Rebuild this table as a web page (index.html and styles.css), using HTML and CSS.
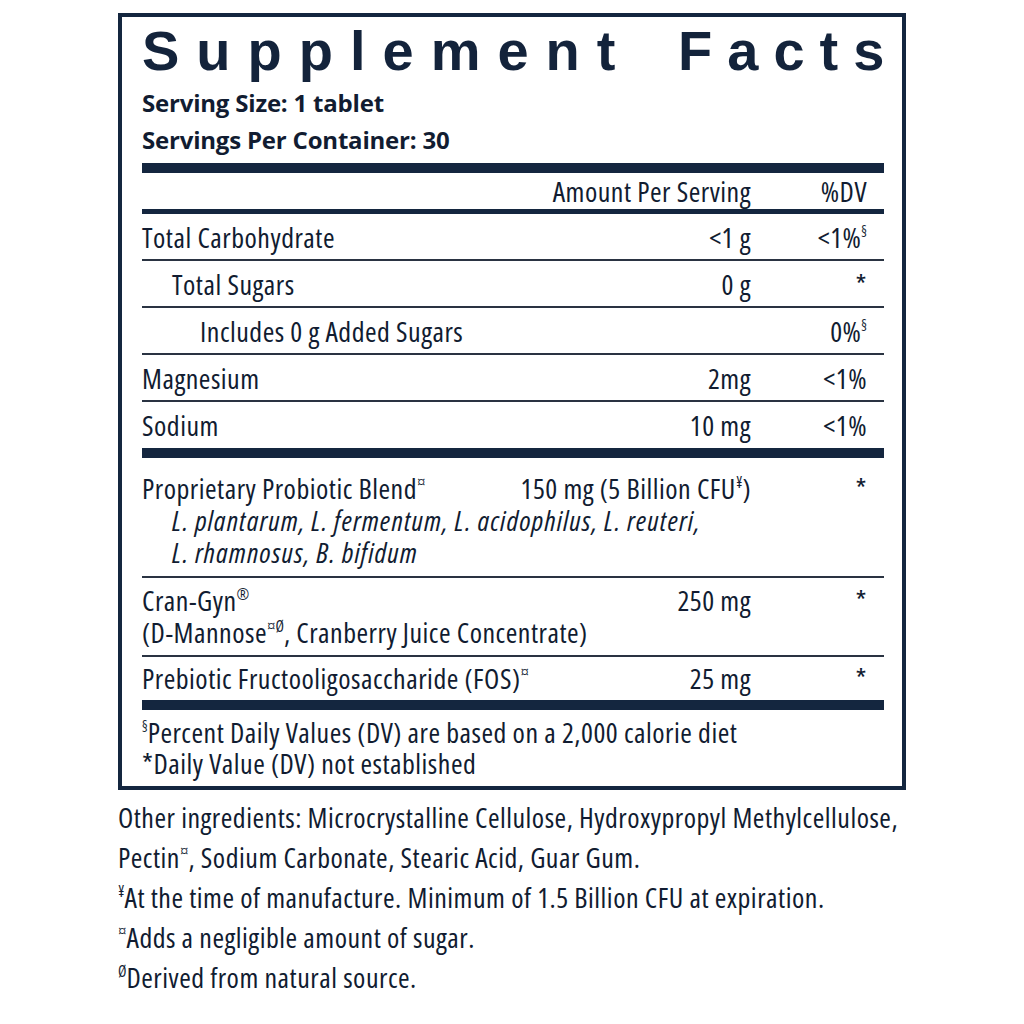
FILE: index.html
```html
<!DOCTYPE html>
<html lang="en">
<head>
<meta charset="utf-8">
<title>Supplement Facts</title>
<link rel="stylesheet" href="styles.css">
</head>
<body>
<div class="label">
  <h1 class="title">Supplement <span class="word">Facts</span></h1>
  <div class="servings">
    <div class="serving">Serving Size: 1 tablet</div>
    <div class="serving">Servings Per Container: 30</div>
  </div>
  <div class="bar bar-thick"></div>
  <div class="row head"><span></span><span class="amt">Amount Per Serving</span><span class="dv">%DV</span></div>
  <div class="bar bar-mid"></div>
  <div class="row line"><span>Total Carbohydrate</span><span class="amt">&lt;1 g</span><span class="dv">&lt;1%<sup class="sym">§</sup></span></div>
  <div class="row line"><span class="ind1">Total Sugars</span><span class="amt">0 g</span><span class="dv">*</span></div>
  <div class="row line"><span class="ind2">Includes 0 g Added Sugars</span><span class="amt"></span><span class="dv">0%<sup class="sym">§</sup></span></div>
  <div class="row line"><span>Magnesium</span><span class="amt">2mg</span><span class="dv">&lt;1%</span></div>
  <div class="row last"><span>Sodium</span><span class="amt">10 mg</span><span class="dv">&lt;1%</span></div>
  <div class="bar bar-thick"></div>
  <div class="blend blend-pro line">
    <span class="nm">Proprietary Probiotic Blend<sup class="sym">¤</sup></span><span class="amt">150 mg (5 Billion CFU<sup class="sym">¥</sup>)</span><span class="dv">*</span>
    <span class="species">L. plantarum, L. fermentum, L. acidophilus, L. reuteri,<br>L. rhamnosus, B. bifidum</span>
  </div>
  <div class="blend blend-cran line">
    <span class="nm">Cran-Gyn<sup class="sym">®</sup><br>(D-Mannose<sup class="sym">¤Ø</sup>, Cranberry Juice Concentrate)</span><span class="amt">250 mg</span><span class="dv">*</span>
  </div>
  <div class="blend blend-fos">
    <span class="nm">Prebiotic Fructooligosaccharide (FOS)<sup class="sym">¤</sup></span><span class="amt">25 mg</span><span class="dv">*</span>
  </div>
  <div class="bar bar-thick"></div>
  <div class="notes">
    <div><sup class="sym">§</sup>Percent Daily Values (DV) are based on a 2,000 calorie diet</div>
    <div>*Daily Value (DV) not established</div>
  </div>
</div>
<div class="other">
  <p>Other ingredients: Microcrystalline Cellulose, Hydroxypropyl Methylcellulose,<br>Pectin<sup class="sym">¤</sup>, Sodium Carbonate, Stearic Acid, Guar Gum.</p>
  <p><sup class="sym">¥</sup>At the time of manufacture. Minimum of 1.5 Billion CFU at expiration.</p>
  <p><sup class="sym">¤</sup>Adds a negligible amount of sugar.</p>
  <p><sup class="sym">Ø</sup>Derived from natural source.</p>
</div>
</body>
</html>
```
FILE: styles.css
```css
* { box-sizing: border-box; }
html, body { background: #ffffff; }
body {
  margin: 0;
  color: #111c31;
  font-family: "Open Sans", "DejaVu Sans Condensed", sans-serif;
  font-stretch: 75%;
  font-size: 28px;
  letter-spacing: 0.5px;
}
.label {
  margin: 13px 0 0 118px;
  width: 788px;
  border: 4px solid #14263f;
  padding: 6px 18px 7px 20px;
}
.title {
  margin: 0;
  font-family: "Liberation Sans", Arial, sans-serif;
  font-stretch: 100%;
  font-weight: 700;
  font-size: 56px;
  line-height: 56px;
  letter-spacing: 17px;
  word-spacing: 13px;
  color: #13233b;
  white-space: nowrap;
}
.title .word { letter-spacing: 15px; }
.servings { padding: 5px 0 5px; }
.serving {
  font-weight: 700;
  font-size: 24px;
  font-stretch: 100%;
  letter-spacing: -0.2px;
  line-height: 37px;
}
.bar { background: #14263f; }
.bar-thick { height: 10px; }
.bar-mid { height: 5px; }
.row {
  display: grid;
  grid-template-columns: 1fr auto 116px;
  padding-right: 17px;
  line-height: 44px;
  padding-top: 1px;
}
.row.head { line-height: 36px; padding-top: 0; }
.line { border-bottom: 2px solid #2a3342; }
.row.last { padding-bottom: 1px; }
.amt { text-align: right; white-space: nowrap; }
.dv { text-align: right; white-space: nowrap; }
.nm { white-space: nowrap; }
.ind1 { padding-left: 30px; }
.ind2 { padding-left: 58px; }
.blend {
  display: grid;
  grid-template-columns: 1fr auto 116px;
  padding-right: 17px;
  line-height: 32px;
  align-items: start;
}
.blend-pro { padding: 14px 17px 8px 0; }
.blend-cran { padding: 6px 17px 7px 0; }
.blend-fos { padding: 5px 17px 6px 0; }
.species {
  grid-column: 1 / 4;
  padding-left: 30px;
  font-style: italic;
  letter-spacing: 1.1px;
  white-space: nowrap;
}
.notes {
  padding-top: 7px;
  line-height: 31px;
}
.sym {
  font-size: 0.55em;
  vertical-align: 0.7em;
  line-height: 0;
  letter-spacing: 0;
}
.other {
  margin: 7px 0 0 118px;
  line-height: 40px;
}
.other p { margin: 0; white-space: nowrap; }
```
